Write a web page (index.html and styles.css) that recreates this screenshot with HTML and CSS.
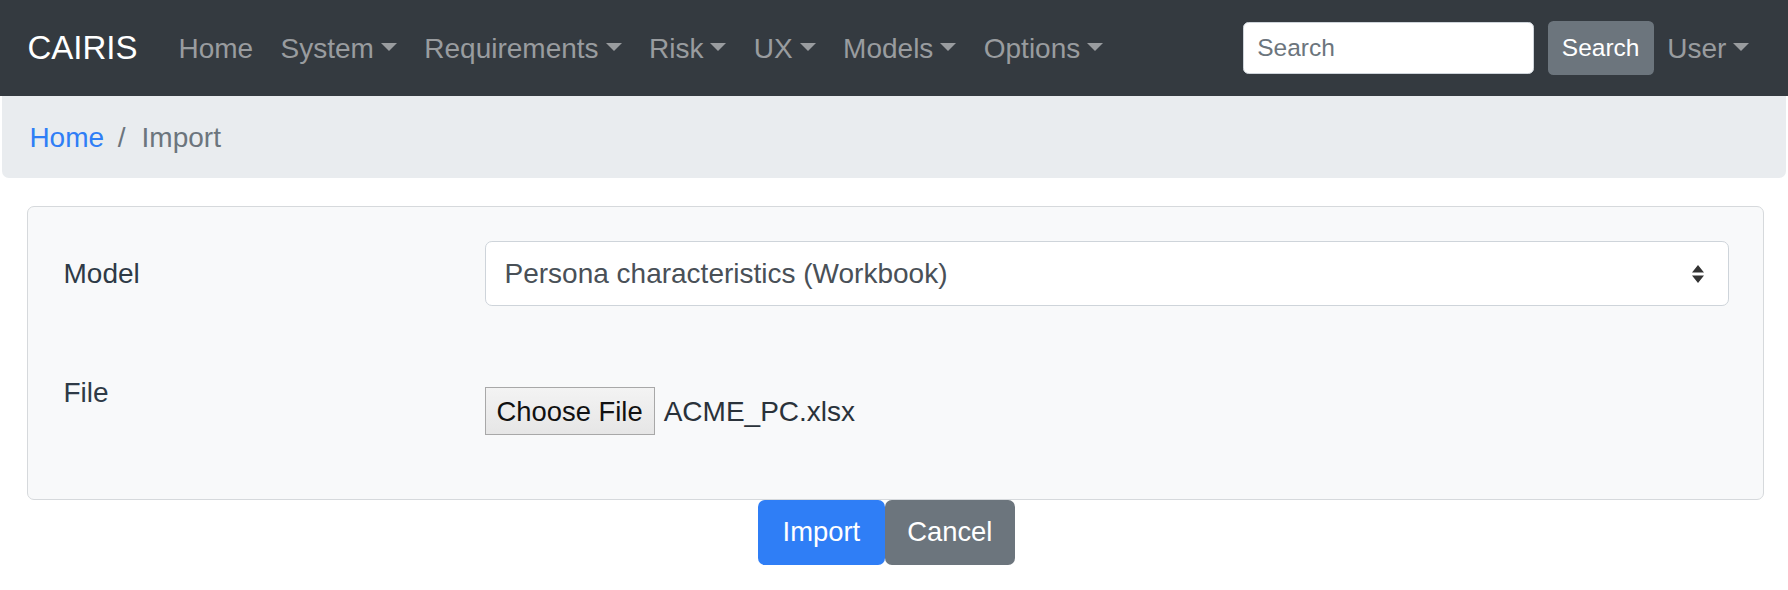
FILE: index.html
```html
<!DOCTYPE html>
<html lang="en">
<head>
<meta charset="utf-8">
<title>CAIRIS - Import</title>
<link rel="stylesheet" href="styles.css">
</head>
<body>
<nav class="navbar">
  <a class="brand" href="#">CAIRIS</a>
  <ul class="nav">
    <li><a class="nav-link" href="#">Home</a></li>
    <li><a class="nav-link caret" href="#">System</a></li>
    <li><a class="nav-link caret" href="#">Requirements</a></li>
    <li><a class="nav-link caret" href="#">Risk</a></li>
    <li><a class="nav-link caret" href="#">UX</a></li>
    <li><a class="nav-link caret" href="#">Models</a></li>
    <li><a class="nav-link caret" href="#">Options</a></li>
  </ul>
  <form class="search">
    <input class="search-input" type="text" placeholder="Search">
    <button class="search-btn" type="button">Search</button>
  </form>
  <a class="nav-link caret user" href="#">User</a>
</nav>

<ol class="breadcrumb">
  <li class="crumb"><a href="#">Home</a></li>
  <li class="crumb active">Import</li>
</ol>

<div class="panel">
  <div class="row row-model">
    <label class="row-label">Model</label>
    <div class="select">
      <span class="select-text">Persona characteristics (Workbook)</span>
      <svg class="select-arrows" width="12" height="18" viewBox="0 0 12 18"><path d="M6 0 L12 7.5 H0 Z M0 10.5 H12 L6 18 Z" fill="#333"/></svg>
    </div>
  </div>
  <div class="row row-file">
    <label class="row-label file-label">File</label>
    <div class="file">
      <span class="file-btn">Choose File</span>
      <span class="file-name">ACME_PC.xlsx</span>
    </div>
  </div>
</div>

<div class="actions">
  <button class="btn btn-primary" type="button">Import</button>
  <button class="btn btn-secondary" type="button">Cancel</button>
</div>
</body>
</html>
```

FILE: styles.css
```css
* { box-sizing: border-box; }
html, body { margin: 0; padding: 0; background: #fff; }
body {
  font-family: "Liberation Sans", Arial, Helvetica, sans-serif;
  font-size: 28px;
  line-height: 41px;
  color: #212529;
}
a { text-decoration: none; }

.navbar {
  height: 96px;
  background: #343a40;
  display: flex;
  align-items: center;
  padding: 0 25px 0 27.4px;
}
.brand {
  color: #fff;
  font-size: 33px;
  line-height: 50px;
  margin-right: 27.4px;
}
.nav {
  list-style: none;
  margin: 0;
  padding: 0;
  display: flex;
}
.nav-link {
  display: block;
  color: #999c9f;
  padding: 0 13.7px;
  line-height: 41px;
}
.caret::after {
  content: "";
  display: inline-block;
  margin-left: 7px;
  vertical-align: 7px;
  border-top: 8.2px solid currentColor;
  border-left: 8.2px solid transparent;
  border-right: 8.2px solid transparent;
}
.search {
  margin: 0 0 0 auto;
  display: flex;
  align-items: center;
}
.search-input {
  width: 291px;
  height: 52px;
  font-family: inherit;
  font-size: 24.5px;
  padding: 0 13px;
  color: #495057;
  background: #fff;
  border: 1.5px solid #ced4da;
  border-radius: 5.5px;
  margin-right: 13.7px;
  outline: none;
}
.search-input::placeholder { color: #6c757d; }
.search-btn {
  height: 54px;
  font-family: inherit;
  font-size: 24.5px;
  color: #fff;
  background: #6c757d;
  border: none;
  border-radius: 5.5px;
  padding: 0 14px;
}

.breadcrumb {
  list-style: none;
  margin: 0 2px 27.4px;
  padding: 20.6px 27.4px;
  background: #e9ecef;
  border-radius: 0 0 6.9px 6.9px;
  display: flex;
  line-height: 41px;
}
.crumb a { color: #2f7ef6; }
.crumb.active { color: #6c757d; }
.crumb + .crumb { padding-left: 13.7px; }
.crumb + .crumb::before {
  content: "/";
  color: #6c757d;
  padding-right: 16px;
}

.panel {
  margin: 0 24px 0 27px;
  background: #f8f9fa;
  border: 1.5px solid #d6d9dc;
  border-radius: 7px;
  padding: 34.5px 34.5px 36px 35.5px;
}
.row { display: flex; }
.row-label {
  flex: 0 0 421px;
  color: #2e3a46;
  line-height: 41px;
}
.row-model { margin-bottom: 27.4px; }
.row-model .row-label { padding-top: 12px; }
.select {
  flex: 1;
  height: 65px;
  background: #fff;
  border: 1.5px solid #ced4da;
  border-radius: 6.9px;
  display: flex;
  align-items: center;
  justify-content: space-between;
  padding: 0 24px 0 19px;
  color: #495057;
}
.row-file { height: 129.4px; }
.file-label { padding-top: 39px; }
.file {
  display: flex;
  align-items: center;
  margin-top: 53.6px;
  height: 48px;
}
.file-btn {
  height: 48px;
  display: flex;
  align-items: center;
  padding: 0 11px;
  background: linear-gradient(#f3f3f3, #e6e6e6);
  border: 1.5px solid #a8a8a8;
  color: #111;
  font-size: 27.4px;
}
.file-name {
  margin-left: 9px;
  color: #2a323a;
}

.actions {
  display: flex;
  justify-content: center;
  padding-right: 15px;
}
.btn {
  height: 65px;
  font-family: inherit;
  font-size: 27.4px;
  color: #fff;
  border: none;
  border-radius: 6.9px;
  padding: 0 23px;
}
.btn-primary { background: #2f7ef6; padding: 0 24.5px; }
.btn-secondary { background: #6c757d; padding: 0 22.5px; }
```
